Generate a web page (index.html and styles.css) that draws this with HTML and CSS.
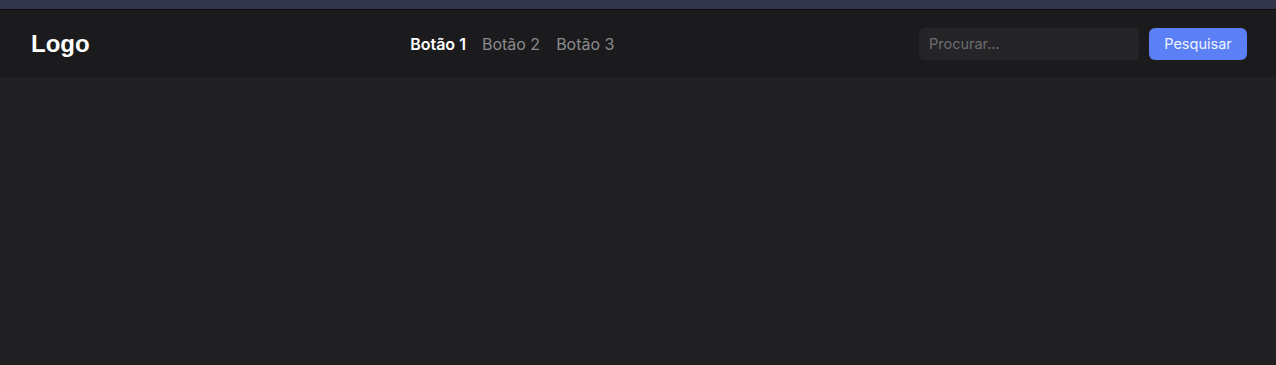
FILE: index.html
```html
<!DOCTYPE html>
<html lang="pt">
<head>
  <meta charset="UTF-8">
  <meta name="viewport" content="width=device-width, initial-scale=1.0">
  <title>Navbar</title>
  <link rel="stylesheet" href="styles.css">
</head>
<body>
  <div class="top-strip"></div>
  <header class="navbar">
    <span class="logo">Logo</span>
    <nav class="nav-links">
      <a href="#" class="nav-link active">Botão 1</a>
      <a href="#" class="nav-link">Botão 2</a>
      <a href="#" class="nav-link">Botão 3</a>
    </nav>
    <form class="search" onsubmit="return false">
      <input type="text" class="search-input" placeholder="Procurar...">
      <button type="submit" class="search-btn">Pesquisar</button>
    </form>
  </header>
  <main class="content"></main>
</body>
</html>
```

FILE: styles.css
```css
/* Reset */
* {
  margin: 0;
  padding: 0;
  box-sizing: border-box;
}

html, body {
  height: 100%;
}

body {
  background: #202022;
  font-family: Inter, "Noto Sans", sans-serif;
  color: #fff;
}

/* Thin strip above the bar */
.top-strip {
  height: 10px;
  background: #33354a;
  border-bottom: 1px solid #111113;
}

/* Navbar */
.navbar {
  display: flex;
  justify-content: space-between;
  align-items: center;
  height: 67px;
  padding: 0 29px 0 31px;
  background: #1b1b1d;
}

.logo {
  font-family: "Liberation Sans", Arial, sans-serif;
  font-size: 24px;
  font-weight: bold;
  color: #fff;
}

.nav-links {
  display: flex;
  gap: 16px;
  margin-left: 16px;
}

.nav-link {
  font-size: 16px;
  color: #8b8b8e;
  text-decoration: none;
}

.nav-link.active {
  color: #fff;
  font-weight: 600;
}

/* Search */
.search {
  display: flex;
  gap: 10px;
}

.search-input {
  width: 220px;
  height: 32px;
  padding: 0 10px;
  background: #252527;
  border: none;
  border-radius: 6px;
  font-family: inherit;
  font-size: 14.5px;
  color: #ddd;
  outline: none;
}

.search-input::placeholder {
  color: #6c6c70;
}

.search-btn {
  width: 98px;
  height: 32px;
  background: #5b80f5;
  border: none;
  border-radius: 6px;
  font-family: inherit;
  font-size: 14.5px;
  color: #eef2ff;
  cursor: pointer;
}

.content {
  min-height: 288px;
}
```
